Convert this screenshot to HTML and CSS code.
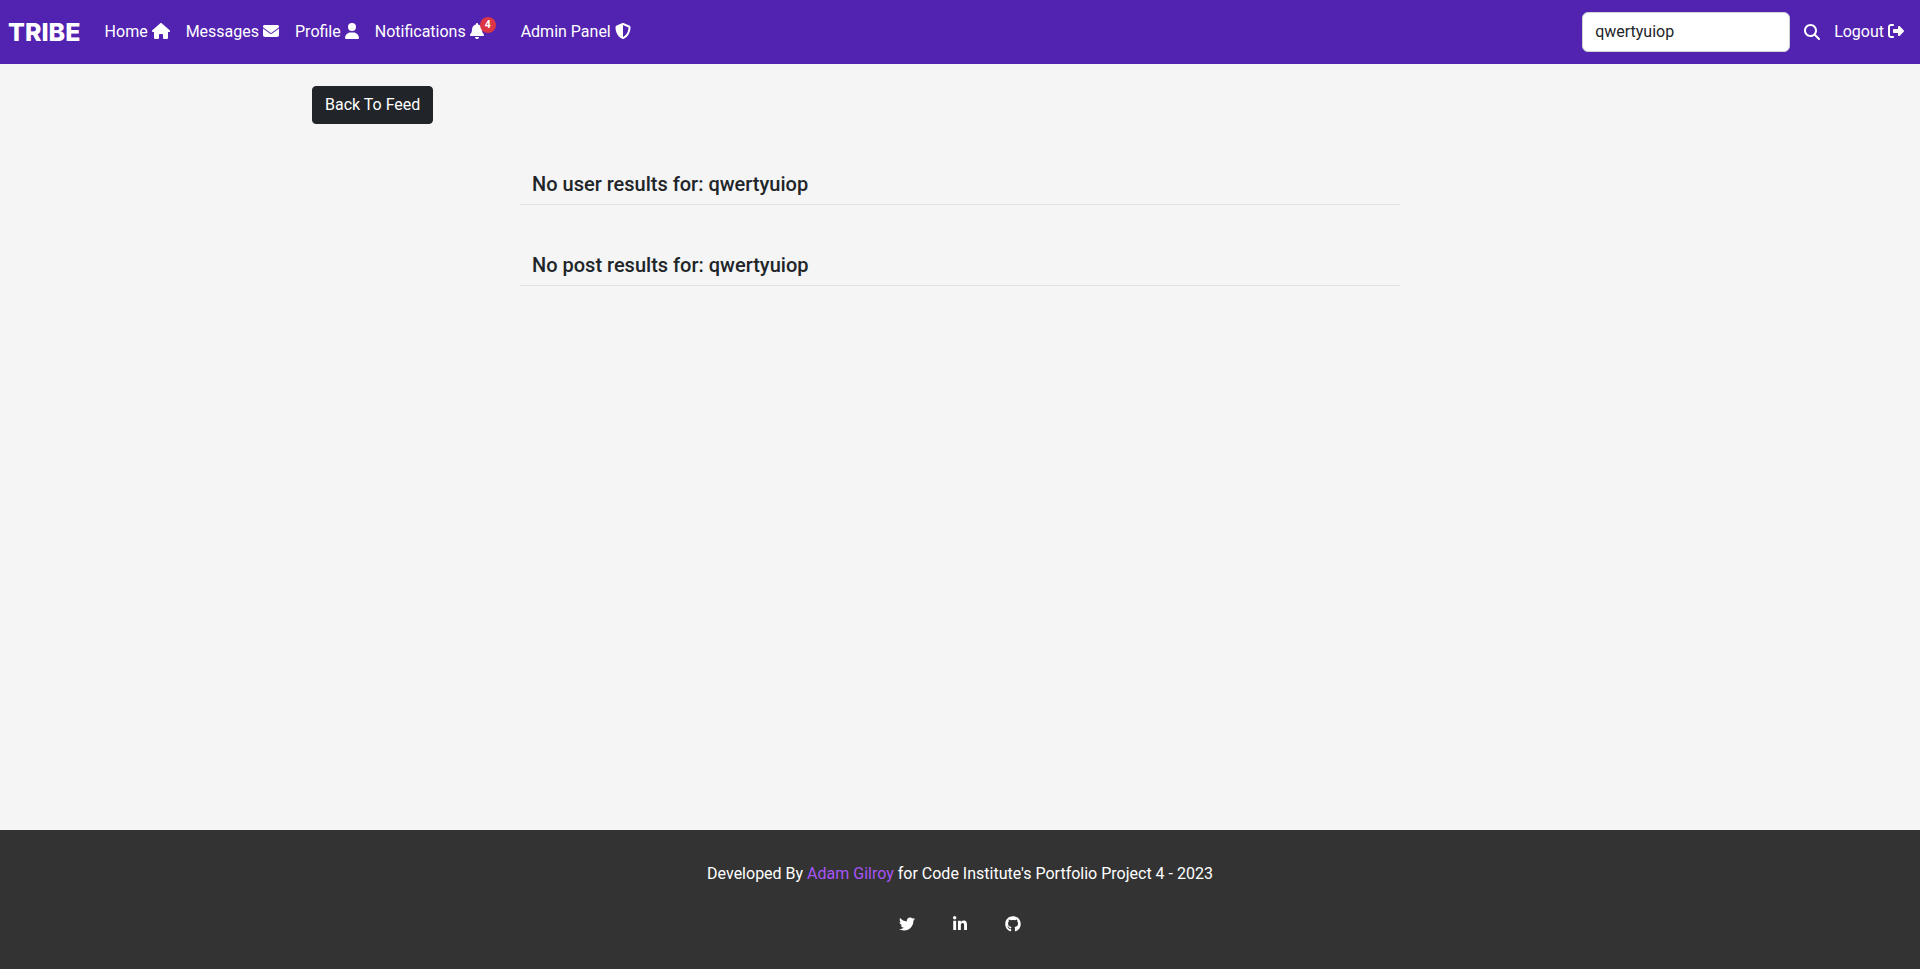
FILE: index.html
```html
<!DOCTYPE html>
<html lang="en">
<head>
<meta charset="utf-8">
<title>Tribe - Search</title>
<link rel="stylesheet" href="styles.css">
</head>
<body>
<nav class="navbar">
  <a class="brand" href="#">TRIBE</a>
  <ul class="nav-links">
    <li><a class="nav-link" href="#">Home <svg class="icon icon-home" viewBox="0 0 576 512"><path d="M575.8 255.5c0 18-15 32.1-32 32.1h-32l.7 160.2c0 2.7-.2 5.4-.5 8.1V472c0 22.1-17.9 40-40 40H456c-1.1 0-2.2 0-3.3-.1c-1.4 .1-2.8 .1-4.2 .1H416 392c-22.1 0-40-17.9-40-40V448 384c0-17.7-14.3-32-32-32H256c-17.7 0-32 14.3-32 32v64 24c0 22.1-17.9 40-40 40H160 128.1c-1.5 0-3-.1-4.5-.2c-1.2 .1-2.4 .2-3.6 .2H104c-22.1 0-40-17.9-40-40V360c0-.9 0-1.9 .1-2.8V287.6H32c-18 0-32-14-32-32.1c0-9 3-17 10-24L266.4 8c7-7 15-8 22-8s15 2 21 7L564.8 231.5c8 7 12 15 11 24z"/></svg></a></li>
    <li><a class="nav-link" href="#">Messages <svg class="icon" viewBox="0 0 512 512"><path d="M48 64C21.5 64 0 85.5 0 112c0 15.1 7.1 29.3 19.2 38.4L236.8 313.6c11.4 8.5 27 8.5 38.4 0L492.8 150.4c12.1-9.1 19.2-23.3 19.2-38.4c0-26.5-21.5-48-48-48H48zM0 176V384c0 35.3 28.7 64 64 64H448c35.3 0 64-28.7 64-64V176L294.4 339.2c-22.8 17.1-54 17.1-76.8 0L0 176z"/></svg></a></li>
    <li><a class="nav-link" href="#">Profile <svg class="icon icon-narrow" viewBox="0 0 448 512"><path d="M224 256A128 128 0 1 0 224 0a128 128 0 1 0 0 256zm-45.7 48C79.8 304 0 383.8 0 482.3C0 498.7 13.3 512 29.7 512H418.3c16.4 0 29.7-13.3 29.7-29.7C448 383.8 368.2 304 269.7 304H178.3z"/></svg></a></li>
    <li class="nav-item-notify"><a class="nav-link" href="#">Notifications <svg class="icon icon-narrow" viewBox="0 0 448 512"><path d="M224 0c-17.7 0-32 14.3-32 32V51.2C119 66 64 130.6 64 208v18.8c0 47-17.3 92.4-48.5 127.6l-7.4 8.3c-8.4 9.4-10.4 22.9-5.3 34.4S19.4 416 32 416H416c12.6 0 24-7.4 29.2-18.9s3.1-25-5.3-34.4l-7.4-8.3C401.3 319.2 384 273.9 384 226.8V208c0-77.4-55-142-128-156.8V32c0-17.7-14.3-32-32-32zm45.3 493.3c12-12 18.7-28.3 18.7-45.3H224 160c0 17 6.7 33.3 18.7 45.3s28.3 18.7 45.3 18.7s33.3-6.7 45.3-18.7z"/></svg><span class="badge">4</span></a></li>
    <li><a class="nav-link" href="#">Admin Panel <svg class="icon" viewBox="0 0 512 512"><path d="M256 0c4.6 0 9.2 1 13.4 2.9L457.7 82.8c22 9.3 38.4 31 38.3 57.2c-.5 99.2-41.3 280.7-213.6 363.2c-16.7 8-36.1 8-52.8 0C57.3 420.7 16.5 239.2 16 140c-.1-26.2 16.3-47.9 38.3-57.2L242.7 2.9C246.8 1 251.4 0 256 0zm0 66.8V444.8C394 378 431.1 230.1 432 141.4L256 66.8l0 0z"/></svg></a></li>
  </ul>
  <form class="search">
    <input class="search-input" type="text" value="qwertyuiop" aria-label="Search">
    <button class="search-btn" type="button" aria-label="Search"><svg class="icon" viewBox="0 0 512 512"><path d="M416 208c0 45.9-14.9 88.3-40 122.7L502.6 457.4c12.5 12.5 12.5 32.8 0 45.3s-32.8 12.5-45.3 0L330.7 376c-34.4 25.2-76.8 40-122.7 40C93.1 416 0 322.9 0 208S93.1 0 208 0S416 93.1 416 208zM208 352a144 144 0 1 0 0-288 144 144 0 1 0 0 288z"/></svg></button>
  </form>
  <a class="nav-link" href="#">Logout <svg class="icon" viewBox="0 0 512 512"><path d="M377.9 105.9L500.7 228.7c7.2 7.2 11.3 17.1 11.3 27.3s-4.1 20.1-11.3 27.3L377.9 406.1c-6.4 6.4-15 9.9-24 9.9c-18.7 0-33.9-15.2-33.9-33.9l0-62.1-128 0c-17.7 0-32-14.3-32-32l0-64c0-17.7 14.3-32 32-32l128 0 0-62.1c0-18.7 15.2-33.9 33.9-33.9c9 0 17.6 3.6 24 9.9zM160 96L96 96c-17.7 0-32 14.3-32 32l0 256c0 17.7 14.3 32 32 32l64 0c17.7 0 32 14.3 32 32s-14.3 32-32 32l-64 0c-53 0-96-43-96-96L0 128C0 75 43 32 96 32l64 0c17.7 0 32 14.3 32 32s-14.3 32-32 32z"/></svg></a>
</nav>
<main class="main">
  <div class="container">
    <a class="btn-back" href="#">Back To Feed</a>
    <section class="results">
      <h5 class="results-title">No user results for: qwertyuiop</h5>
      <h5 class="results-title">No post results for: qwertyuiop</h5>
    </section>
  </div>
</main>
<footer class="footer">
  <p class="footer-text">Developed By <a class="footer-link" href="#">Adam Gilroy</a> for Code Institute's Portfolio Project 4 - 2023</p>
  <div class="socials">
    <a class="social" href="#" aria-label="Twitter"><svg class="icon" viewBox="0 0 512 512"><path d="M459.37 151.716c.325 4.548.325 9.097.325 13.645 0 138.72-105.583 298.558-298.558 298.558-59.452 0-114.68-17.219-161.137-47.106 8.447.974 16.568 1.299 25.34 1.299 49.055 0 94.213-16.568 130.274-44.832-46.132-.975-84.792-31.188-98.112-72.772 6.498.974 12.995 1.624 19.818 1.624 9.421 0 18.843-1.3 27.614-3.573-48.081-9.747-84.143-51.98-84.143-102.985v-1.299c13.969 7.797 30.214 12.67 47.431 13.319-28.264-18.843-46.781-51.005-46.781-87.391 0-19.492 5.197-37.36 14.294-52.954 51.655 63.675 129.3 105.258 216.365 109.807-1.624-7.797-2.599-15.918-2.599-24.04 0-57.828 46.782-104.934 104.934-104.934 30.213 0 57.502 12.67 76.67 33.137 23.715-4.548 46.456-13.32 66.599-25.34-7.798 24.366-24.366 44.833-46.132 57.827 21.117-2.273 41.584-8.122 60.426-16.243-14.292 20.791-32.161 39.308-52.628 54.253z"/></svg></a>
    <a class="social" href="#" aria-label="LinkedIn"><svg class="icon icon-narrow" viewBox="0 0 448 512"><path d="M100.28 448H7.4V148.9h92.88zM53.79 108.1C24.09 108.1 0 83.5 0 53.8a53.79 53.79 0 0 1 107.58 0c0 29.7-24.1 54.3-53.79 54.3zM447.9 448h-92.68V302.4c0-34.7-.7-79.2-48.29-79.2-48.29 0-55.69 37.7-55.69 76.7V448h-92.78V148.9h89.08v40.8h1.3c12.4-23.5 42.69-48.3 87.88-48.3 94 0 111.28 61.9 111.28 142.3V448z"/></svg></a>
    <a class="social" href="#" aria-label="GitHub"><svg class="icon" viewBox="0 0 496 512"><path d="M165.9 397.4c0 2-2.3 3.6-5.2 3.6-3.3.3-5.6-1.3-5.6-3.6 0-2 2.3-3.6 5.2-3.6 3-.3 5.6 1.3 5.6 3.6zm-31.1-4.5c-.7 2 1.3 4.3 4.3 4.9 2.6 1 5.6 0 6.2-2s-1.3-4.3-4.3-5.2c-2.6-.7-5.5.3-6.2 2.3zm44.2-1.7c-2.9.7-4.9 2.6-4.6 4.9.3 2 2.9 3.3 5.9 2.6 2.9-.7 4.9-2.6 4.6-4.6-.3-1.9-3-3.2-5.9-2.9zM244.8 8C106.1 8 0 113.3 0 252c0 110.9 69.8 205.8 169.5 239.2 12.8 2.3 17.3-5.6 17.3-12.1 0-6.2-.3-40.4-.3-61.4 0 0-70 15-84.7-29.8 0 0-11.4-29.1-27.8-36.6 0 0-22.9-15.7 1.6-15.4 0 0 24.9 2 38.6 25.8 21.9 38.6 58.6 27.5 72.9 20.9 2.3-16 8.8-27.1 16-33.7-55.9-6.2-112.3-14.3-112.3-110.5 0-27.5 7.6-41.3 23.6-58.9-2.6-6.5-11.1-33.3 2.6-67.9 20.9-6.5 69 27 69 27 20-5.6 41.5-8.5 62.8-8.5s42.8 2.9 62.8 8.5c0 0 48.1-33.6 69-27 13.7 34.7 5.2 61.4 2.6 67.9 16 17.7 25.8 31.5 25.8 58.9 0 96.5-58.9 104.2-114.8 110.5 9.2 7.9 17 22.9 17 46.4 0 33.7-.3 75.4-.3 83.6 0 6.5 4.6 14.4 17.3 12.1C428.2 457.8 496 362.9 496 252 496 113.3 383.5 8 244.8 8z"/></svg></a>
  </div>
</footer>
</body>
</html>
```

FILE: styles.css
```css
* { box-sizing: border-box; }

html, body { margin: 0; height: 100%; }

body {
  display: flex;
  flex-direction: column;
  background: #f5f5f5;
  color: #212529;
  font-family: Roboto, "Liberation Sans", sans-serif;
  font-size: 16px;
  line-height: 24px;
}

a { text-decoration: none; }

.navbar {
  display: flex;
  align-items: center;
  height: 64px;
  padding: 0 8px;
  background: #5222b0;
  flex: none;
}

.brand {
  width: 89px;
  margin-right: -0.4px;
  color: #fff;
  font-family: Inter, Roboto, sans-serif;
  font-size: 25px;
  font-weight: 800;
  letter-spacing: 0;
  line-height: 24px;
}

.nav-links {
  display: flex;
  align-items: center;
  flex: 1;
  margin: 0;
  padding: 0;
  list-style: none;
}

.nav-link {
  display: block;
  padding: 8px;
  color: #fff;
  white-space: nowrap;
}

.nav-item-notify { position: relative; margin-right: 21px; }

.icon {
  display: inline-block;
  width: 16px;
  height: 16px;
  fill: currentColor;
  vertical-align: -2px;
}

.icon-home { width: 18px; }
.icon-narrow { width: 14px; }

.badge {
  position: absolute;
  top: 5px;
  left: 113px;
  width: 16px;
  height: 16px;
  border-radius: 50%;
  background: #dc3545;
  color: #fff;
  font-size: 10.5px;
  font-weight: 700;
  line-height: 16px;
  text-align: center;
}

.search { display: flex; align-items: center; }

.search-input {
  width: 208px;
  height: 40px;
  padding: 5px 12px 7px;
  border: 1px solid #ced4da;
  border-radius: 6px;
  background: #fff;
  color: #212529;
  font: 16px/24px Roboto, sans-serif;
}

.search-btn {
  display: flex;
  margin: 0 6px 0 14px;
  padding: 0;
  border: 0;
  background: none;
  color: #fff;
}

.main { flex: 1; }

.container {
  width: 1296px;
  margin: 0 auto;
  padding-top: 22px;
}

.btn-back {
  display: inline-block;
  height: 38px;
  padding: 6px 12px;
  border: 1px solid #212529;
  border-radius: 4px;
  background: #212529;
  color: #fff;
}

.results {
  display: flex;
  flex-direction: column;
  gap: 48px;
  width: 880px;
  margin: 48px 0 0 208px;
}

.results-title {
  margin: 0;
  padding: 0 12px 8px;
  border-bottom: 1px solid #dee2e6;
  color: #212529;
  font-size: 20px;
  font-weight: 500;
  line-height: 24px;
}

.footer {
  flex: none;
  height: 139px;
  padding-top: 32px;
  background: #333;
  color: #fff;
  text-align: center;
}

.footer-text { margin: 0 0 30px; }

.footer-link { color: #a855f7; }

.socials {
  display: flex;
  justify-content: center;
  gap: 37px;
}

.social {
  display: flex;
  justify-content: center;
  width: 16px;
  color: #fff;
}
```
